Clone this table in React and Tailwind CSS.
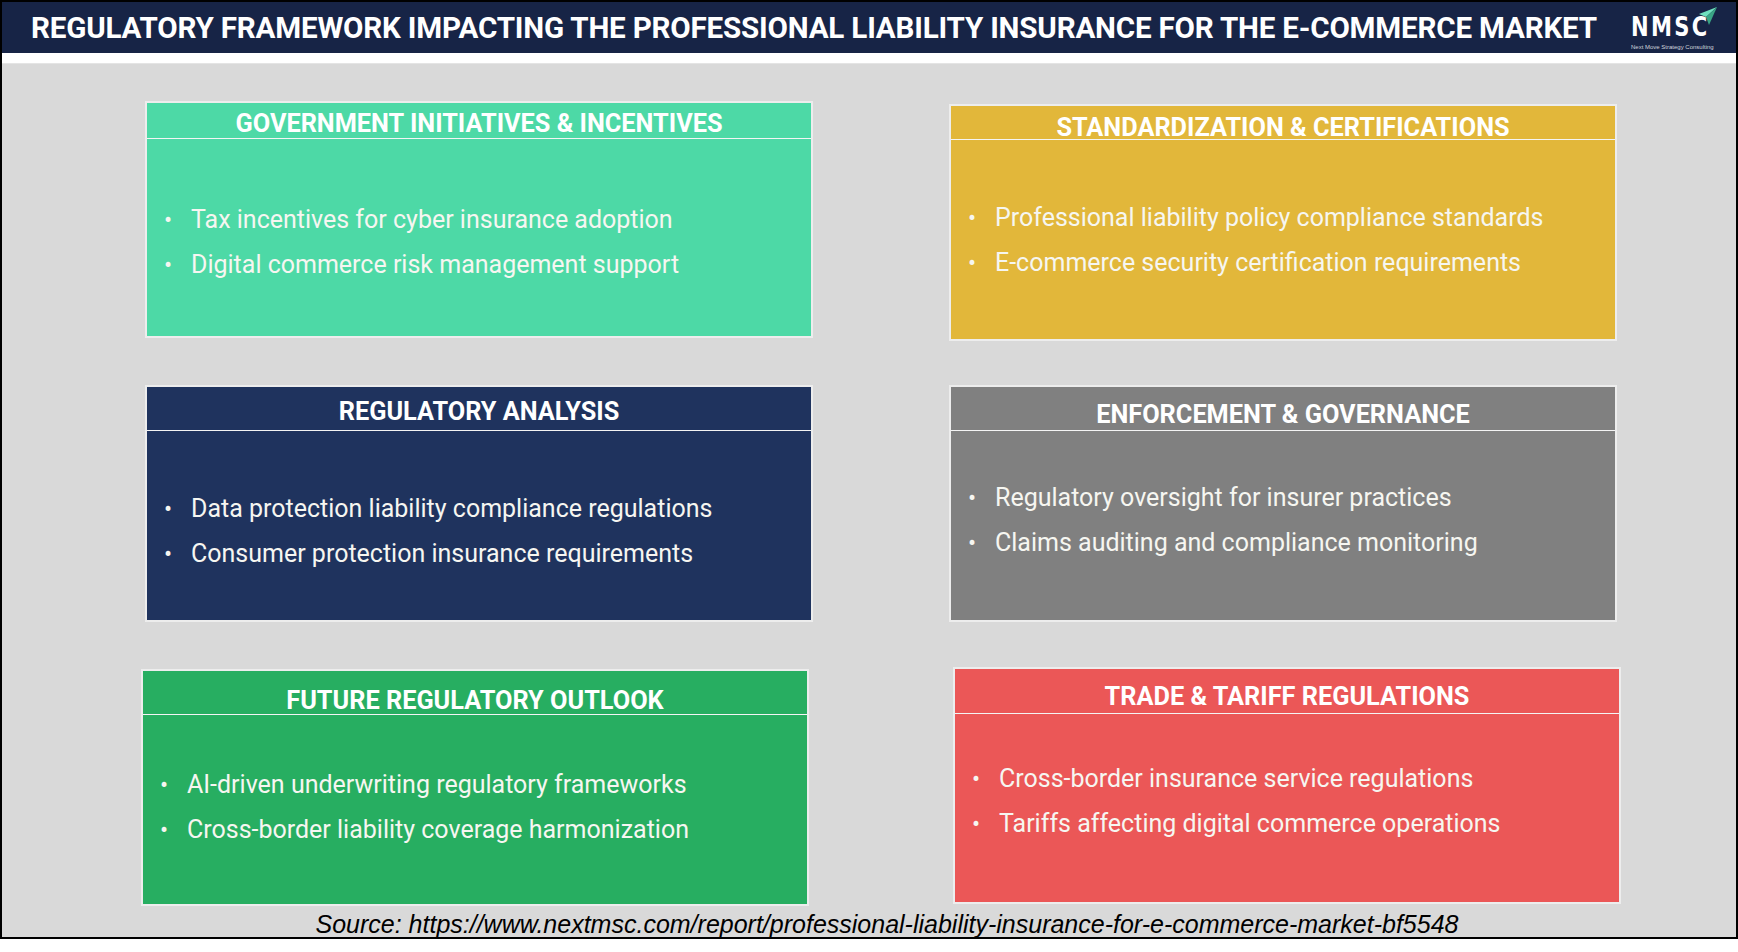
import React from 'react'

const cards = [
  {
    title: 'GOVERNMENT INITIATIVES & INCENTIVES',
    items: ['Tax incentives for cyber insurance adoption', 'Digital commerce risk management support'],
    bg: 'bg-[#4dd9a6]',
    head: 'h-[36px] pt-[7px]',
    pos: '',
    body: 'pt-[9px]',
  },
  {
    title: 'STANDARDIZATION & CERTIFICATIONS',
    items: ['Professional liability policy compliance standards', 'E-commerce security certification requirements'],
    bg: 'bg-[#e2b73a]',
    head: 'h-[34px] pt-[10px]',
    pos: 'mt-[3px]',
    body: 'pt-[2px]',
  },
  {
    title: 'REGULATORY ANALYSIS',
    items: ['Data protection liability compliance regulations', 'Consumer protection insurance requirements'],
    bg: 'bg-[#1f335e]',
    head: 'h-[44px] pt-[7px]',
    pos: '',
    body: 'pt-[11px]',
  },
  {
    title: 'ENFORCEMENT & GOVERNANCE',
    items: ['Regulatory oversight for insurer practices', 'Claims auditing and compliance monitoring'],
    bg: 'bg-[#808080]',
    head: 'h-[44px] pt-[12px]',
    pos: '',
    body: 'pb-[10px]',
  },
  {
    title: 'FUTURE REGULATORY OUTLOOK',
    items: ['AI-driven underwriting regulatory frameworks', 'Cross-border liability coverage harmonization'],
    bg: 'bg-[#27ae61]',
    head: 'h-[44px] pt-[16px]',
    pos: 'ml-[-4px]',
    body: 'pb-[5px]',
  },
  {
    title: 'TRADE & TARIFF REGULATIONS',
    items: ['Cross-border insurance service regulations', 'Tariffs affecting digital commerce operations'],
    bg: 'bg-[#eb5757]',
    head: 'h-[45px] pt-[11px]',
    pos: 'ml-[4px] mt-[-2px]',
    body: 'pb-[13px]',
  },
]

const Logo = () => (
  <div className="relative w-[90px] h-[48px] shrink-0">
    <svg className="absolute right-[0px] top-[2px]" width="22" height="20" viewBox="0 0 22 20">
      <path d="M21 1 L3 8 L10 11 Z" fill="#6fe0bd" />
      <path d="M21 1 L10 11 L13 19 Z" fill="#3aa585" />
    </svg>
    <div className="absolute left-[3px] top-[9px] text-white font-bold text-[27px] leading-none tracking-[3px] scale-x-[0.78] origin-left" style={{ fontFamily: '"DejaVu Sans", sans-serif' }}>
      NMSC
    </div>
    <div className="absolute left-[3px] top-[40px] text-[6px] leading-none text-gray-300 whitespace-nowrap" style={{ fontFamily: '"Liberation Sans", sans-serif' }}>
      Next Move Strategy Consulting
    </div>
  </div>
)

const Card = ({ card }) => (
  <div className={`flex flex-col w-[668px] h-[237px] border-2 border-[#ededed] ${card.bg} ${card.pos}`}>
    <div className={`shrink-0 flex items-center justify-center border-b border-[#f4f4f4] ${card.head}`}>
      <h2 className="text-white font-bold text-[25.3px] leading-none">{card.title}</h2>
    </div>
    <div className={`flex-1 flex flex-col justify-center gap-[19px] pl-[17px] ${card.body}`}>
      {card.items.map((item) => (
        <div key={item} className="flex items-center text-[#f6f6f1] text-[25px] leading-[26px]">
          <span className="w-[27px] text-[24px]">•</span>
          <span>{item}</span>
        </div>
      ))}
    </div>
  </div>
)

export default function App() {
  return (
    <div className="w-[1738px] h-[952px] bg-white" style={{ fontFamily: 'Roboto, "Liberation Sans", sans-serif' }}>
      <div className="h-[939px] border-2 border-black flex flex-col overflow-hidden">
        <header className="h-[51px] shrink-0 bg-[#172446] flex items-center justify-between pl-[29px] pr-[18px]">
          <h1 className="text-white font-bold text-[29.6px] leading-none tracking-[-0.2px] pt-[2px]">
            REGULATORY FRAMEWORK IMPACTING THE PROFESSIONAL LIABILITY INSURANCE FOR THE E-COMMERCE MARKET
          </h1>
          <Logo />
        </header>
        <div className="h-[11px] shrink-0 bg-white border-b border-[#e4e4e4]" />
        <main className="flex-1 bg-[#d9d9d9] flex flex-col">
          <div className="grid grid-cols-[668px_668px] grid-rows-[237px_237px_237px] gap-x-[136px] gap-y-[47px] pl-[143px] pt-[37px]">
            {cards.map((c) => (
              <Card key={c.title} card={c} />
            ))}
          </div>
          <p className="mt-[4px] text-center italic text-[25px] leading-[28px] text-black pl-[36px]" style={{ fontFamily: '"Liberation Sans", Arial, sans-serif' }}>
            Source: https://www.nextmsc.com/report/professional-liability-insurance-for-e-commerce-market-bf5548
          </p>
        </main>
      </div>
    </div>
  )
}
